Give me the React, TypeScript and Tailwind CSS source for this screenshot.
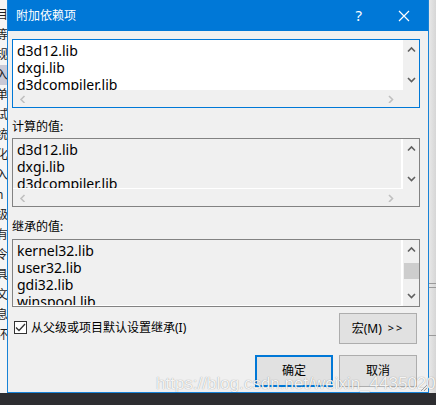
import React from 'react';

const FONT = { fontFamily: '"Noto Sans", "Noto Sans CJK SC", sans-serif' };

const sideChars = ['目', '等', '规', '入', '单', '试', '统', '化', '入', 'n', '级', '有', '令', '具', '文', '息', '环'];

const Chevron = ({ dir, color = '#606060' }: { dir: 'up' | 'down' | 'left' | 'right'; color?: string }) => {
  const paths: Record<string, string> = {
    up: 'M1 5.5 L4.5 2 L8 5.5',
    down: 'M1 2 L4.5 5.5 L8 2',
    left: 'M5.5 1 L2 4.5 L5.5 8',
    right: 'M2 1 L5.5 4.5 L2 8',
  };
  return (
    <svg width="9" height="8" viewBox="0 0 9 8">
      <path d={paths[dir]} stroke={color} strokeWidth="1.6" fill="none" />
    </svg>
  );
};

const Lines = ({ items }: { items: string[] }) => (
  <div className="pt-[2px] pl-[4px] text-[14px] leading-[17px] text-black whitespace-nowrap">
    {items.map((t, i) => (
      <div key={i}>{t}</div>
    ))}
  </div>
);

const VScroll = ({ thumb = false }: { thumb?: boolean }) => (
  <div className="w-[17px] h-full bg-[#f0f0f0] flex flex-col items-center justify-between py-[6px] border-l border-white">
    <Chevron dir="up" />
    {thumb && <div className="w-[15px] h-[16px] bg-[#cdcdcd] -mt-[4px]" />}
    <Chevron dir="down" />
  </div>
);

const ListBox = ({
  items,
  focused,
  hscroll,
  thumb,
  white,
  h,
}: {
  items: string[];
  focused?: boolean;
  hscroll?: boolean;
  thumb?: boolean;
  white?: boolean;
  h: string;
}) => (
  <div className={`${h} border ${focused ? 'border-[#0078d7]' : 'border-[#828282]'} flex flex-col`}>
    <div className="flex flex-1 min-h-0">
      <div className={`flex-1 overflow-hidden ${white ? 'bg-white' : 'bg-[#f0f0f0] border-b border-r border-white'}`}>
        <Lines items={items} />
      </div>
      <VScroll thumb={thumb} />
    </div>
    {hscroll && (
      <div className="h-[17px] flex bg-[#f0f0f0]">
        <div className="flex-1 flex items-center justify-between px-[6px]">
          <Chevron dir="left" color="#c0c0c0" />
          <Chevron dir="right" color="#c0c0c0" />
        </div>
        <div className="w-[17px]" />
      </div>
    )}
  </div>
);

export default function App() {
  return (
    <div className="relative w-[436px] h-[405px] overflow-hidden bg-[#2d2d30]" style={FONT}>
      <div className="flex h-[393px]">
        {/* background window on the left */}
        <div className="w-[7px] bg-[#f5f5f5] overflow-hidden flex flex-col pt-[5px] text-[12px] leading-[20px] text-[#1e1e1e]">
          {sideChars.map((c, i) => (
            <div key={i} className={`-ml-[4px] ${i === 3 ? 'bg-[#c9c9d6]' : ''}`}>{c}</div>
          ))}
        </div>

        {/* dialog */}
        <div className="w-[422px] border-x border-b border-[#1883d7] bg-[#f0f0f0] flex flex-col">
          <div className="h-[31px] bg-[#0078d7] flex items-center text-white shrink-0">
            <span className="ml-[8px] text-[12px]">附加依赖项</span>
            <span className="ml-auto text-[15px] mr-[36px]">?</span>
            <svg width="12" height="12" viewBox="0 0 12 12" className="mr-[18px]">
              <path d="M1 1 L11 11 M11 1 L1 11" stroke="white" strokeWidth="1.2" />
            </svg>
          </div>

          <div className="flex flex-col pl-[4px] pr-[8px] pt-[8px]">
            <ListBox items={['d3d12.lib', 'dxgi.lib', 'd3dcompiler.lib']} focused hscroll white h="h-[69px]" />

            <div className="mt-[10px] text-[12px] leading-[17px]">计算的值:</div>
            <div className="mt-[3px]">
              <ListBox items={['d3d12.lib', 'dxgi.lib', 'd3dcompiler.lib']} hscroll h="h-[69px]" />
            </div>

            <div className="mt-[11px] text-[12px] leading-[17px]">继承的值:</div>
            <div className="mt-[4px]">
              <ListBox items={['kernel32.lib', 'user32.lib', 'gdi32.lib', 'winspool.lib']} thumb h="h-[68px]" />
            </div>

            <div className="mt-[6px] flex items-start pr-[3px]">
              <div className="flex items-center mt-[6px] ml-[2px]">
                <div className="w-[13px] h-[13px] border border-[#333333] bg-white flex items-center justify-center">
                  <svg width="11" height="9" viewBox="0 0 11 9">
                    <path d="M1 4.5 L4 7.5 L10 1" stroke="#333333" strokeWidth="1.3" fill="none" />
                  </svg>
                </div>
                <span className="ml-[4px] text-[12px] leading-[17px]">从父级或项目默认设置继承(I)</span>
              </div>
              <button className="ml-auto w-[78px] h-[31px] border border-[#adadad] bg-[#e1e1e1] text-[12px] text-black flex items-center justify-center">
                宏(M) <span className="ml-[6px] text-[11px] tracking-[2px]">&gt;&gt;</span>
              </button>
            </div>

            <div className="mt-[11px] flex justify-end gap-[6px] pr-[3px]">
              <button className="w-[78px] h-[32px] border-2 border-[#0078d7] bg-[#e1e1e1] text-[12px] text-black">确定</button>
              <button className="w-[78px] h-[32px] border border-[#adadad] bg-[#e1e1e1] text-[12px] text-black">取消</button>
            </div>
          </div>
        </div>

        {/* background window on the right */}
        <div className="w-[7px] bg-gradient-to-r from-[#e8e8e8] to-[#d6d6d6] flex flex-col">
          <div className="mt-[283px] h-[1px] bg-[#9a9a9a]" />
          <div className="mt-[3px] h-[1px] bg-[#9a9a9a]" />
          <div className="mt-[47px] h-[1px] bg-[#9a9a9a]" />
        </div>
      </div>

      {/* watermark */}
      <div
        className="absolute left-[156px] top-[374px] text-[17px] leading-[20px] text-white/90 whitespace-nowrap"
        style={{ fontFamily: '"Liberation Sans", Arial, sans-serif', textShadow: '0 0 1px rgba(0,0,0,0.45)' }}
      >
        https://blog.csdn.net/weixin_44350205
      </div>

      {/* resize grip */}
      <svg className="absolute left-[420px] top-[384px]" width="8" height="8" viewBox="0 0 8 8">
        <path d="M7 1 L1 7 M7 4 L4 7" stroke="#a0a0a0" strokeWidth="1" />
      </svg>
    </div>
  );
}
